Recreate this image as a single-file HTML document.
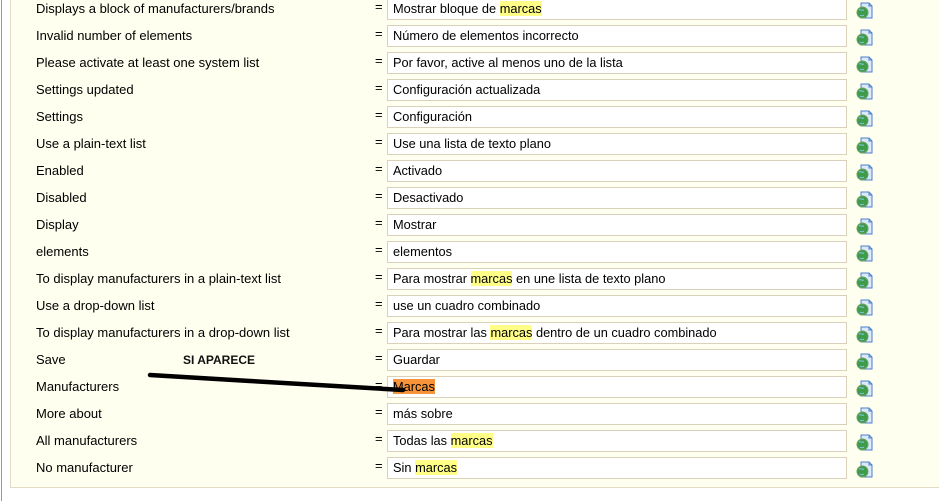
<!DOCTYPE html>
<html><head><meta charset="utf-8"><style>
body{margin:0;width:939px;height:501px;background:#fff;position:relative;overflow:hidden;font-family:"Liberation Sans",Arial,sans-serif;font-size:13px;color:#000}
.vl{position:absolute;left:1px;top:0;width:1px;height:501px;background:#999}
.panel{position:absolute;left:10px;top:-5px;width:940px;height:493px;background:#fffff0;border:1px solid #e2dcc6;box-sizing:border-box}
.row{position:absolute;left:0;height:27px;width:939px}
.lab{position:absolute;left:36px;top:1px}
.eq{position:absolute;left:375px;top:-1px}
.in{position:absolute;left:387px;top:-2px;width:460px;height:22px;background:#fff;border:1px solid #d9d1bb;box-sizing:border-box;padding:2px 0 0 5px;color:#000;font-size:12.8px}
.hl{background:#ffff88}
.or{background:#f7943a}
.ic{position:absolute;left:856px;top:2px;width:17px;height:17px}
</style></head><body>
<div class="vl"></div>
<div class="panel"></div>
<div class="row" style="top:0"><span class="lab">Displays a block of manufacturers/brands</span><span class="eq">=</span><div class="in">Mostrar bloque de <span class="hl">marcas</span></div><svg class="ic"><use href="#i"/></svg></div>
<div class="row" style="top:27px"><span class="lab">Invalid number of elements</span><span class="eq">=</span><div class="in">Número de elementos incorrecto</div><svg class="ic"><use href="#i"/></svg></div>
<div class="row" style="top:54px"><span class="lab">Please activate at least one system list</span><span class="eq">=</span><div class="in">Por favor, active al menos uno de la lista</div><svg class="ic"><use href="#i"/></svg></div>
<div class="row" style="top:81px"><span class="lab">Settings updated</span><span class="eq">=</span><div class="in">Configuración actualizada</div><svg class="ic"><use href="#i"/></svg></div>
<div class="row" style="top:108px"><span class="lab">Settings</span><span class="eq">=</span><div class="in">Configuración</div><svg class="ic"><use href="#i"/></svg></div>
<div class="row" style="top:135px"><span class="lab">Use a plain-text list</span><span class="eq">=</span><div class="in">Use una lista de texto plano</div><svg class="ic"><use href="#i"/></svg></div>
<div class="row" style="top:162px"><span class="lab">Enabled</span><span class="eq">=</span><div class="in">Activado</div><svg class="ic"><use href="#i"/></svg></div>
<div class="row" style="top:189px"><span class="lab">Disabled</span><span class="eq">=</span><div class="in">Desactivado</div><svg class="ic"><use href="#i"/></svg></div>
<div class="row" style="top:216px"><span class="lab">Display</span><span class="eq">=</span><div class="in">Mostrar</div><svg class="ic"><use href="#i"/></svg></div>
<div class="row" style="top:243px"><span class="lab">elements</span><span class="eq">=</span><div class="in">elementos</div><svg class="ic"><use href="#i"/></svg></div>
<div class="row" style="top:270px"><span class="lab">To display manufacturers in a plain-text list</span><span class="eq">=</span><div class="in">Para mostrar <span class="hl">marcas</span> en une lista de texto plano</div><svg class="ic"><use href="#i"/></svg></div>
<div class="row" style="top:297px"><span class="lab">Use a drop-down list</span><span class="eq">=</span><div class="in">use un cuadro combinado</div><svg class="ic"><use href="#i"/></svg></div>
<div class="row" style="top:324px"><span class="lab">To display manufacturers in a drop-down list</span><span class="eq">=</span><div class="in">Para mostrar las <span class="hl">marcas</span> dentro de un cuadro combinado</div><svg class="ic"><use href="#i"/></svg></div>
<div class="row" style="top:351px"><span class="lab">Save</span><span class="eq">=</span><div class="in">Guardar</div><svg class="ic"><use href="#i"/></svg></div>
<div class="row" style="top:378px"><span class="lab">Manufacturers</span><span class="eq">=</span><div class="in"><span class="or">Marcas</span></div><svg class="ic"><use href="#i"/></svg></div>
<div class="row" style="top:405px"><span class="lab">More about</span><span class="eq">=</span><div class="in">más sobre</div><svg class="ic"><use href="#i"/></svg></div>
<div class="row" style="top:432px"><span class="lab">All manufacturers</span><span class="eq">=</span><div class="in">Todas las <span class="hl">marcas</span></div><svg class="ic"><use href="#i"/></svg></div>
<div class="row" style="top:459px"><span class="lab">No manufacturer</span><span class="eq">=</span><div class="in">Sin <span class="hl">marcas</span></div><svg class="ic"><use href="#i"/></svg></div>
<div style="position:absolute;left:183px;top:353px;font-weight:bold;font-size:12px;color:#111">SI APARECE</div>
<svg style="position:absolute;left:0;top:0" width="939" height="501"><path d="M150 375 L250 381 L403 390" stroke="#000" stroke-width="4.5" fill="none" stroke-linecap="round"/>
<defs><symbol id="i" viewBox="0 0 17 17"><path d="M5 1h8l3 3v12H5z" fill="#dbe9fb" stroke="#4b7fc7"/><path d="M13 1v3h3" fill="none" stroke="#4b7fc7"/><circle cx="6.5" cy="10.5" r="5.5" fill="#3f9a4a" stroke="#6aa060"/><path d="M3 8c2-1 3 1 5 0M4 13c1 1 3 1 4 0" stroke="#7fc4ea" fill="none"/></symbol></defs></svg>
</body></html>
